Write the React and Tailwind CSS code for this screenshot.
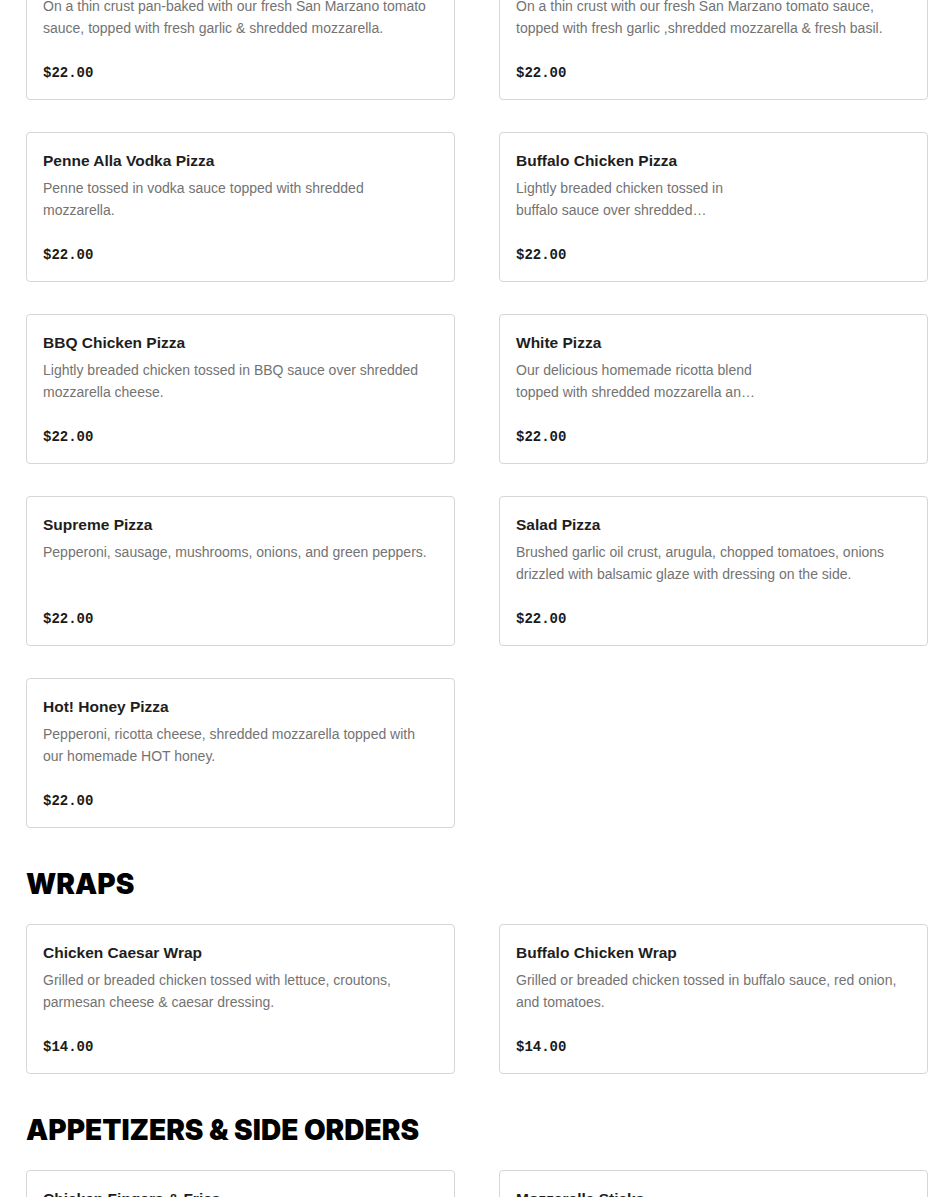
import React from 'react';

const sections = [
  {
    title: null,
    items: [
      { name: 'Grandma Pizza', desc: 'On a thin crust pan-baked with our fresh San Marzano tomato sauce, topped with fresh garlic & shredded mozzarella.', price: '$22.00' },
      { name: 'Margherita Pizza', desc: 'On a thin crust with our fresh San Marzano tomato sauce, topped with fresh garlic ,shredded mozzarella & fresh basil.', price: '$22.00' },
      { name: 'Penne Alla Vodka Pizza', desc: 'Penne tossed in vodka sauce topped with shredded mozzarella.', price: '$22.00' },
      { name: 'Buffalo Chicken Pizza', desc: 'Lightly breaded chicken tossed in buffalo sauce over shredded mozzarella cheese.', price: '$22.00', narrow: true },
      { name: 'BBQ Chicken Pizza', desc: 'Lightly breaded chicken tossed in BBQ sauce over shredded mozzarella cheese.', price: '$22.00' },
      { name: 'White Pizza', desc: 'Our delicious homemade ricotta blend topped with shredded mozzarella and garlic.', price: '$22.00', narrow: true },
      { name: 'Supreme Pizza', desc: 'Pepperoni, sausage, mushrooms, onions, and green peppers.', price: '$22.00' },
      { name: 'Salad Pizza', desc: 'Brushed garlic oil crust, arugula, chopped tomatoes, onions drizzled with balsamic glaze with dressing on the side.', price: '$22.00' },
      { name: 'Hot! Honey Pizza', desc: 'Pepperoni, ricotta cheese, shredded mozzarella topped with our homemade HOT honey.', price: '$22.00' },
    ],
  },
  {
    title: 'WRAPS',
    items: [
      { name: 'Chicken Caesar Wrap', desc: 'Grilled or breaded chicken tossed with lettuce, croutons, parmesan cheese & caesar dressing.', price: '$14.00' },
      { name: 'Buffalo Chicken Wrap', desc: 'Grilled or breaded chicken tossed in buffalo sauce, red onion, and tomatoes.', price: '$14.00' },
    ],
  },
  {
    title: 'APPETIZERS & SIDE ORDERS',
    items: [
      { name: 'Chicken Fingers & Fries', desc: 'Breaded chicken fingers served with french fries.', price: '$14.00' },
      { name: 'Mozzarella Sticks', desc: 'Served with a side of marinara sauce.', price: '$10.00' },
    ],
  },
];

function ItemCard({ item }) {
  return (
    <div className="h-[150px] flex flex-col border border-[#d6d6d6] rounded-[4px] bg-white px-4 pt-[18px] pb-[16px]">
      <div className="text-[15.5px] leading-[20px] font-semibold text-[#1e1e1e]">{item.name}</div>
      <p className={`mt-[6px] text-[14px] leading-[22px] text-[#737373] ${item.narrow ? 'w-[244px] line-clamp-2' : ''}`}>
        {item.desc}
      </p>
      <div className="mt-auto text-[14px] leading-[20px] font-bold text-[#1a1a1a] font-['Liberation_Mono',monospace]">
        {item.price}
      </div>
    </div>
  );
}

export default function App() {
  return (
    <div className="bg-white min-h-screen overflow-hidden font-['Liberation_Sans',Arial,sans-serif]">
      <div className="-mt-[50px] pl-[26px] w-[928px]">
        {sections.map((section, i) => (
          <section key={i}>
            {section.title && (
              <h2 className="mt-[40px] mb-[24px] text-[28px] leading-[32px] font-black text-black font-['Inter','Liberation_Sans',sans-serif]">
                {section.title}
              </h2>
            )}
            <div className="grid grid-cols-2 gap-x-[44px] gap-y-[32px]">
              {section.items.map((item) => (
                <ItemCard key={item.name} item={item} />
              ))}
            </div>
          </section>
        ))}
      </div>
    </div>
  );
}
